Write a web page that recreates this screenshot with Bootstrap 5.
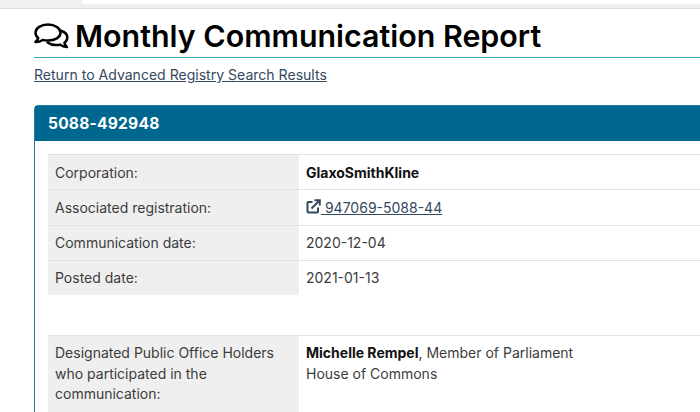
<!DOCTYPE html>
<html lang="en">
<head>
    <meta charset="UTF-8">
    <meta name="viewport" content="width=device-width, initial-scale=1.0">
    <title>Monthly Communication Report</title>
    <link href="https://cdn.jsdelivr.net/npm/bootstrap@5.3.0/dist/css/bootstrap.min.css" rel="stylesheet">
    <style>
        html, body { height: 412px; overflow: hidden; }
        body { font-family: Inter, "Liberation Sans", sans-serif; font-size: 14px; color: #3c3c3c; background: #fff; }
        .top-strip { height: 9px; background: #f0f0f0; border-bottom: 1px solid #ddd; }
        .top-tab { height: 4px; margin-left: 82px; background: #fff; border-bottom-left-radius: 4px; }
        .page-wrap { width: 900px; padding: 0 0 0 34px; }
        .report-title { font-size: 30.4px; font-weight: 600; color: #000; margin: 0; border-bottom: 1px solid #3ba7bf; display: flex; align-items: center; gap: 6px; height: 49px; padding-top: 6px; }
        .back-link { display: block; margin-top: 8px; line-height: 17px; color: #34495e; font-size: 14.05px; }
        .report-card { margin-top: 22px; border: 1px solid #1f7fa6; border-radius: 4px 4px 0 0; }
        .report-head { background: #00678f; color: #fff; font-size: 15.5px; font-weight: 700; line-height: 35px; height: 35px; padding-left: 13px; letter-spacing: .25px; }
        .report-body { padding: 13px; }
        .info-table { table-layout: fixed; width: 100%; margin: 0; }
        .info-table td { border: 0; border-top: 1px solid #e2e2e2; padding: 8.500px 7px 7.750px; line-height: 18px; font-size: 14px; color: #3c3c3c; background: #fff; box-shadow: none; }
        .info-table td.lbl { width: 251px; background: #efefef; }
        .info-table td b { font-weight: 700; color: #111; }
        .info-table td a { color: #34495e; }
        .gap-block { height: 40px; }
        .tall td { padding: 7px 7px 7px; line-height: 20.5px !important; border-bottom: 1px solid #e2e2e2 !important; }
        .tall td.lbl { height: 77px; }
    </style>
</head>
<body>
    <div class="top-strip"><div class="top-tab"></div></div>
    <div class="page-wrap">
        <h1 class="report-title">
            <svg width="35" height="27" viewBox="0 0 35 27" fill="none" stroke="#000" stroke-width="2.500" stroke-linejoin="round" stroke-linecap="round">
                <path d="M14 1.500C7 1.500 1.500 5 1.500 9.800c0 2.100 1 4 2.800 5.400-.4 1.400-1.300 2.600-2.900 3.800 2.800.1 5.300-.7 7.300-2.100 1.600.5 3.400.7 5.300.7 7 0 12.500-3.400 12.500-7.800S21 1.500 14 1.500z"/>
                <path d="M26.800 7.800c3.900 1.200 6.500 3.700 6.500 6.700 0 2.100-1.100 3.900-2.900 5.300.3 1.500 1.100 2.900 2.500 4.300-2.700-.2-5-1.100-6.700-2.500-1.300.4-2.700.5-4.100.5-3.400 0-6.400-1-8.500-2.600"/>
            </svg>
            <span>Monthly Communication Report</span>
        </h1>
        <a class="back-link" href="#">Return to Advanced Registry Search Results</a>

        <div class="report-card">
            <div class="report-head">5088-492948</div>
            <div class="report-body">
                <table class="table info-table">
                    <tr><td class="lbl">Corporation:</td><td><b>GlaxoSmithKline</b></td></tr>
                    <tr>
                        <td class="lbl">Associated registration:</td>
                        <td><a href="#"><svg width="15" height="15" viewBox="0 0 15 15" fill="none" stroke="#34495e" stroke-width="2" class="align-text-top"><path d="M6.500 3H2.500a1 1 0 0 0-1 1v8.500a1 1 0 0 0 1 1H11a1 1 0 0 0 1-1V8.500"/><path d="M5.500 9.500 13 2"/><path d="M8.500 1.200h5.300v5.300"/></svg> 947069-5088-44</a></td>
                    </tr>
                    <tr><td class="lbl">Communication date:</td><td>2020-12-04</td></tr>
                    <tr><td class="lbl">Posted date:</td><td>2021-01-13</td></tr>
                </table>
                <div class="gap-block"></div>
                <table class="table info-table tall">
                    <tr>
                        <td class="lbl">Designated Public Office Holders who participated in the communication:</td>
                        <td class="align-top"><b>Michelle Rempel</b>, Member of Parliament<br>House of Commons</td>
                    </tr>
                </table>
            </div>
        </div>
    </div>
    <script src="https://cdn.jsdelivr.net/npm/bootstrap@5.3.0/dist/js/bootstrap.bundle.min.js"></script>
</body>
</html>
